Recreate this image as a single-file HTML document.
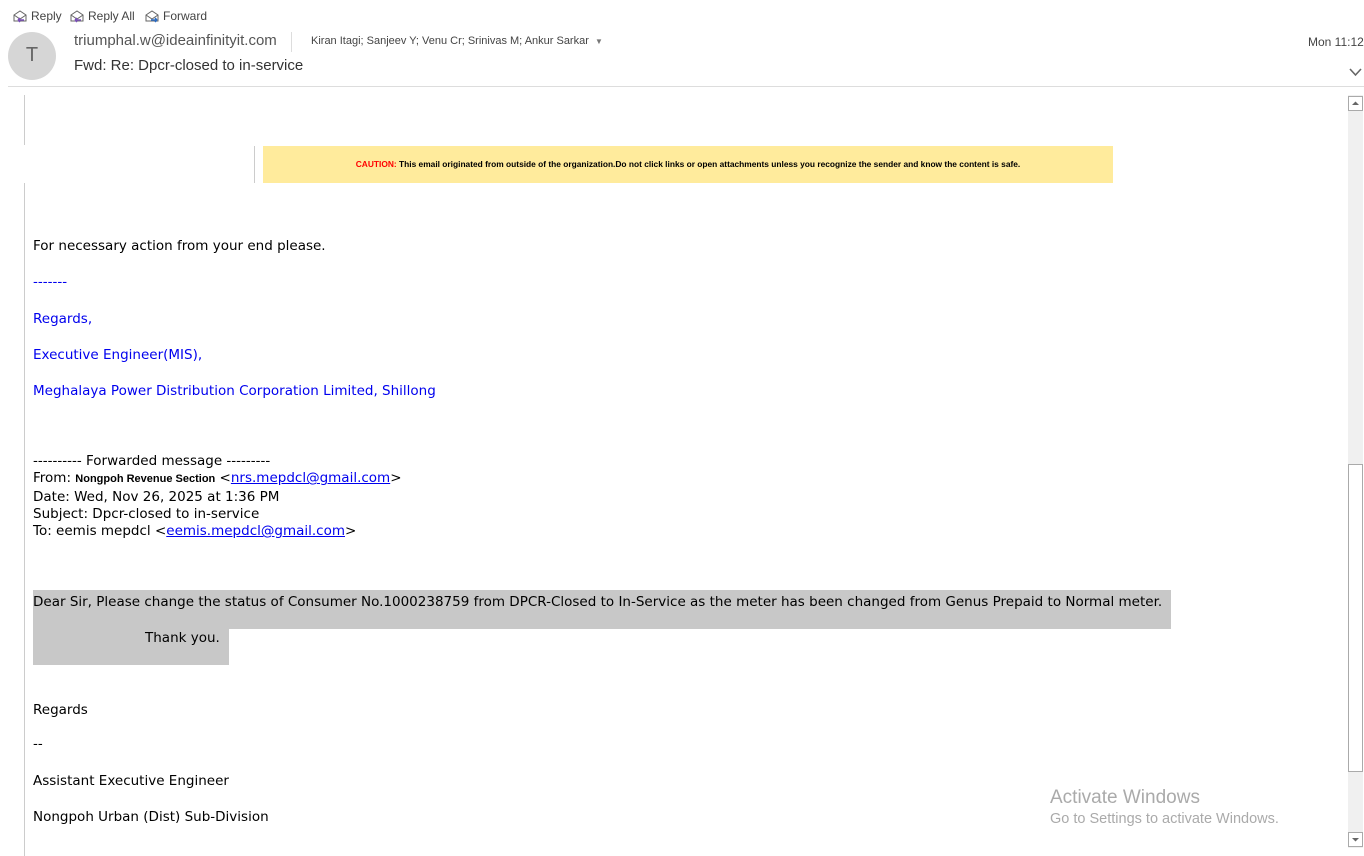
<!DOCTYPE html>
<html><head><style>
*{margin:0;padding:0;box-sizing:border-box}
body{width:1364px;height:856px;overflow:hidden;background:#fff;font-family:"Liberation Sans",sans-serif;position:relative}
.a{position:absolute;white-space:nowrap}
.v{font-family:"DejaVu Sans",sans-serif;font-size:13.5px;color:#000}
.v.b{color:#0000ee}
a{color:#0000ee;text-decoration:underline}
.tb{font-size:12px;color:#444;display:flex;align-items:center;gap:3px}
</style></head><body>
<div class="a tb" style="left:12px;top:9px">
<svg width="16" height="14" viewBox="0 0 16 14"><path d="M2 6 L8 2 L14 6 V12 H2 Z M2 6 L8 10 L14 6" fill="none" stroke="#666"/><path d="M6 11 H12 M6 11 L8 9 M6 11 L8 13" stroke="#7a4fb8" stroke-width="1.5" fill="none"/></svg>Reply</div>
<div class="a tb" style="left:69px;top:9px">
<svg width="16" height="14" viewBox="0 0 16 14"><path d="M2 6 L8 2 L14 6 V12 H2 Z M2 6 L8 10 L14 6" fill="none" stroke="#666"/><path d="M6 11 H12 M6 11 L8 9 M6 11 L8 13" stroke="#7a4fb8" stroke-width="1.5" fill="none"/></svg>Reply All</div>
<div class="a tb" style="left:144px;top:9px">
<svg width="16" height="14" viewBox="0 0 16 14"><path d="M2 6 L8 2 L14 6 V12 H2 Z M2 6 L8 10 L14 6" fill="none" stroke="#666"/><path d="M7 11 H13 M13 11 L11 9 M13 11 L11 13" stroke="#2b6cc4" stroke-width="1.5" fill="none"/></svg>Forward</div>
<div class="a" style="left:8px;top:32px;width:48px;height:48px;border-radius:50%;background:#d6d6d6;color:#666;font-size:20px;text-align:center;line-height:46px">T</div>
<div class="a" style="left:74px;top:32px;font-size:15px;color:#555">triumphal.w@ideainfinityit.com</div>
<div class="a" style="left:291px;top:32px;width:1px;height:20px;background:#ddd"></div>
<div class="a" style="left:311px;top:35px;font-size:11px;color:#444">Kiran Itagi; Sanjeev Y; Venu Cr; Srinivas M; Ankur Sarkar &nbsp;<span style="font-size:8px;color:#777">▼</span></div>
<div class="a" style="left:1308px;top:35px;font-size:12px;color:#444">Mon 11:12</div>
<div class="a" style="left:74px;top:57px;font-size:15px;color:#333">Fwd: Re: Dpcr-closed to in-service</div>
<svg class="a" style="left:1349px;top:68px" width="13" height="9" viewBox="0 0 13 9"><path d="M1 1 L6.5 7 L12 1" fill="none" stroke="#666" stroke-width="1.6"/></svg>
<div class="a" style="left:8px;top:86px;width:1356px;height:1px;background:#ddd"></div>
<div class="a" style="left:24px;top:95px;width:1px;height:50px;background:#ccc"></div>
<div class="a" style="left:24px;top:183px;width:1px;height:673px;background:#ccc"></div>
<div class="a" style="left:254px;top:146px;width:1px;height:37px;background:#ccc"></div>
<div class="a" style="left:263px;top:146px;width:850px;height:37px;background:#ffeb9c;font-size:8.4px;font-weight:bold;text-align:center;line-height:37px;color:#000"><span style="color:#f00">CAUTION:</span> This email originated from outside of the organization.Do not click links or open attachments unless you recognize the sender and know the content is safe.</div>
<div class="a v" style="left:33px;top:238px">For necessary action from your end please.</div>
<div class="a v b" style="left:33px;top:274px">-------</div>
<div class="a v b" style="left:33px;top:311px">Regards,</div>
<div class="a v b" style="left:33px;top:347px">Executive Engineer(MIS),</div>
<div class="a v b" style="left:33px;top:383px">Meghalaya Power Distribution Corporation Limited, Shillong</div>
<div class="a v" style="left:33px;top:453px;line-height:17.3px">---------- Forwarded message ---------<br>From: <b style="font-size:11px;font-family:'Liberation Sans',sans-serif">Nongpoh Revenue Section</b> &lt;<a>nrs.mepdcl@gmail.com</a>&gt;<br>Date: Wed, Nov 26, 2025 at 1:36 PM<br>Subject: Dpcr-closed to in-service<br>To: eemis mepdcl &lt;<a>eemis.mepdcl@gmail.com</a>&gt;</div>
<div class="a" style="left:33px;top:590px;width:1138px;height:39px;background:#c8c8c8"></div>
<div class="a" style="left:33px;top:629px;width:196px;height:36px;background:#c8c8c8"></div>
<div class="a v" style="left:33px;top:594px">Dear Sir, Please change the status of Consumer No.1000238759 from DPCR-Closed to In-Service as the meter has been changed from Genus Prepaid to Normal meter.</div>
<div class="a v" style="left:145px;top:630px">Thank you.</div>
<div class="a v" style="left:33px;top:702px">Regards</div>
<div class="a v" style="left:33px;top:736px">--</div>
<div class="a v" style="left:33px;top:773px">Assistant Executive Engineer</div>
<div class="a v" style="left:33px;top:809px">Nongpoh Urban (Dist) Sub-Division</div>
<div class="a" style="left:1050px;top:787px;font-size:19px;color:#aaa">Activate Windows</div>
<div class="a" style="left:1050px;top:811px;font-size:14.5px;color:#aaa">Go to Settings to activate Windows.</div>
<div class="a" style="left:1348px;top:95px;width:15px;height:753px;background:#f0f0f0"></div>
<div class="a" style="left:1348px;top:96px;width:15px;height:15px;border:1px solid #aaa;background:#fff"><svg width="13" height="13" viewBox="0 0 13 13" style="display:block"><path d="M3 8 L6.5 4.5 L10 8Z" fill="#666"/></svg></div>
<div class="a" style="left:1348px;top:464px;width:15px;height:308px;border:1px solid #aaa;background:#fff"></div>
<div class="a" style="left:1348px;top:832px;width:15px;height:15px;border:1px solid #aaa;background:#fff"><svg width="13" height="13" viewBox="0 0 13 13" style="display:block"><path d="M3 5 L6.5 8.5 L10 5Z" fill="#666"/></svg></div>
</body></html>
